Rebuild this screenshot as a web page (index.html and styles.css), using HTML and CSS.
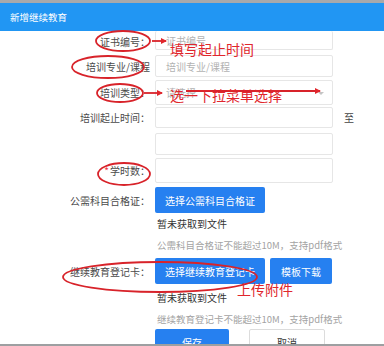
FILE: index.html
```html
<!DOCTYPE html>
<html lang="zh">
<head>
<meta charset="utf-8">
<title>新增继续教育</title>
<link rel="stylesheet" href="styles.css">
</head>
<body>
<div class="page">
  <div class="topline"></div>
  <div class="header">新增继续教育</div>
  <div class="form">
    <div class="row r1">
      <div class="label">证书编号：</div>
      <div class="control"><div class="input"><span class="ph">证书编号</span></div></div>
    </div>
    <div class="row r2">
      <div class="label">培训专业/课程</div>
      <div class="control"><div class="input"><span class="ph">培训专业/课程</span></div></div>
    </div>
    <div class="row r3">
      <div class="label">培训类型：</div>
      <div class="control"><div class="input select"><span class="ph">请选择</span><span class="caret"></span></div></div>
    </div>
    <div class="row r4">
      <div class="label">培训起止时间：</div>
      <div class="control"><div class="input"></div></div>
      <div class="extra">至</div>
    </div>
    <div class="row r5">
      <div class="label"></div>
      <div class="control"><div class="input"></div></div>
    </div>
    <div class="row r6">
      <div class="label"><span class="star">*</span>学时数：</div>
      <div class="control"><div class="input"></div></div>
    </div>
    <div class="row r7">
      <div class="label">公需科目合格证：</div>
      <div class="control"><button class="btn primary w110">选择公需科目合格证</button></div>
    </div>
    <div class="row line">
      <div class="label"></div>
      <div class="control status">暂未获取到文件</div>
    </div>
    <div class="row line">
      <div class="label"></div>
      <div class="control hint">公需科目合格证不能超过10M，支持pdf格式</div>
    </div>
    <div class="row r10">
      <div class="label">继续教育登记卡：</div>
      <div class="control btns">
        <button class="btn primary w110">选择继续教育登记卡</button>
        <button class="btn primary w62">模板下载</button>
      </div>
    </div>
    <div class="row line l11">
      <div class="label"></div>
      <div class="control status">暂未获取到文件</div>
    </div>
    <div class="row line">
      <div class="label"></div>
      <div class="control hint">继续教育登记卡不能超过10M，支持pdf格式</div>
    </div>
    <div class="row r13">
      <div class="label"></div>
      <div class="control footer">
        <button class="btn primary save">保存</button>
        <button class="btn plain cancel">取消</button>
      </div>
    </div>
  </div>

  <svg class="marks" viewBox="0 0 384 346" width="384" height="346">
    <defs>
      <marker id="ah" markerWidth="6" markerHeight="6" refX="5" refY="3" orient="auto" markerUnits="userSpaceOnUse">
        <path d="M0,0 L6,3 L0,6 z" fill="#e0262c"/>
      </marker>
    </defs>
    <g fill="none" stroke="#d8232a" stroke-width="1.8">
      <ellipse cx="123" cy="41" rx="27" ry="10"/>
      <ellipse cx="108" cy="67" rx="36" ry="11"/>
      <ellipse cx="120" cy="93" rx="23" ry="9"/>
      <ellipse cx="124" cy="174" rx="26" ry="11"/>
      <ellipse cx="160" cy="277" rx="97" ry="15"/>
      <line x1="152" y1="41" x2="166" y2="41" marker-end="url(#ah)"/>
      <line x1="144" y1="93" x2="162" y2="93" marker-end="url(#ah)"/>
      <line x1="186" y1="91" x2="320" y2="91" marker-end="url(#ah)"/>
    </g>
    <g class="note">
      <text x="170" y="55">填写起止时间</text>
      <text x="170" y="101">选一下拉菜单选择</text>
      <text x="237" y="295">上传附件</text>
    </g>
  </svg>
  <div class="bottomline"></div>
</div>
</body>
</html>
```
FILE: styles.css
```css
* { box-sizing: border-box; }
html, body { margin: 0; padding: 0; background: #ffffff; }
body {
  font-family: "Noto Sans CJK SC", "Noto Sans", sans-serif;
  width: 384px;
  height: 346px;
  overflow: hidden;
}
.page {
  position: relative;
  width: 384px;
  height: 346px;
  overflow: hidden;
  background: #fff;
}
.topline { height: 3px; background: #a7a9ab; }
.header {
  height: 28px;
  background: #2196f3;
  color: #fff;
  font-size: 9.5px;
  line-height: 28px;
  padding-left: 10px;
}
.form {
  display: flex;
  flex-direction: column;
}
.row {
  display: grid;
  grid-template-columns: 155px 178px 1fr;
  align-items: center;
}
.label {
  text-align: right;
  padding-right: 5px;
  font-size: 10px;
  color: #4a4a4a;
  white-space: nowrap;
}
.star { color: #e34; margin-right: 1px; }
.input {
  height: 100%;
  border: 1px solid #e6e6e6;
  border-radius: 2px;
  display: flex;
  align-items: center;
  padding-left: 10px;
  position: relative;
}
.control { height: 100%; display: flex; align-items: center; }
.control .input { width: 178px; }
.ph { font-size: 10px; color: #b2b2b2; }
.caret {
  position: absolute;
  right: 8px;
  top: 50%;
  margin-top: -1px;
  border-left: 3px solid transparent;
  border-right: 3px solid transparent;
  border-top: 3px solid #c4c4c4;
}
.extra { font-size: 10px; color: #444; padding-left: 11px; }

.r1 { height: 19px; margin-top: 0; }
.r1 .input { border-top: none; }
.r1 .label { padding-top: 2px; }
.r2 { height: 22px; margin-top: 5px; }
.r3 { height: 25px; margin-top: 3px; }
.r4 { height: 21px; margin-top: 2px; }
.r5 { height: 22px; margin-top: 5px; }
.r6 { height: 25px; margin-top: 3px; }
.r7 { height: 26px; margin-top: 4px; }
.line { height: 21px; }
.r10 { height: 26px; margin-top: 3px; }
.l11 { margin-top: 3px; }
.r13 { height: 26px; margin-top: 0px; }

.status { font-size: 10px; color: #333; padding-left: 2px; }
.hint { font-size: 9.5px; color: #a3a3a3; padding-left: 2px; white-space: nowrap; }

.btn {
  font-family: inherit;
  font-size: 10px;
  height: 100%;
  border-radius: 2px;
  padding: 0;
  cursor: pointer;
}
.primary { background: #2680f0; color: #fff; border: none; }
.plain { background: #fff; color: #333; border: 1px solid #dcdcdc; }
.w110 { width: 110px; }
.w62 { width: 62px; }
.btns { gap: 5px; }
.footer { gap: 20px; align-items: flex-start; }
.save { width: 74px; height: 26px; }
.cancel { width: 76px; height: 26px; }

.marks {
  position: absolute;
  left: 0;
  top: 0;
  pointer-events: none;
}
.note text {
  fill: #e0262c;
  font-family: "Noto Sans CJK SC", sans-serif;
  font-size: 14px;
}
.bottomline {
  position: absolute;
  left: 0;
  right: 0;
  bottom: 0;
  height: 2px;
  background: #9d9fa1;
}
```
